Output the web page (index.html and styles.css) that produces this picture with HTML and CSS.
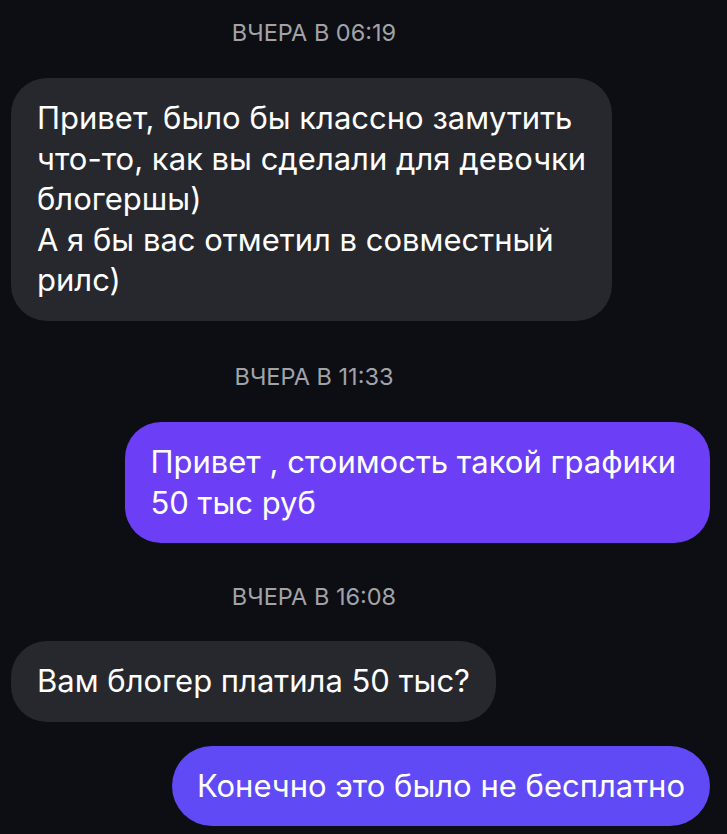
FILE: index.html
```html
<!DOCTYPE html>
<html lang="ru">
<head>
    <meta charset="UTF-8">
    <meta name="viewport" content="width=device-width, initial-scale=1.0">
    <title>Чат</title>
    <link rel="stylesheet" href="styles.css">
</head>
<body>
    <div class="chat">
        <div class="time">ВЧЕРА В 06:19</div>
        <div class="bubble in">Привет, было бы классно замутить<br>что-то, как вы сделали для девочки<br>блогершы)<br>А я бы вас отметил в совместный<br>рилс)</div>

        <div class="time">ВЧЕРА В 11:33</div>
        <div class="bubble out first">Привет , стоимость такой графики<br>50 тыс руб</div>

        <div class="time later">ВЧЕРА В 16:08</div>
        <div class="bubble in">Вам блогер платила 50 тыс?</div>
        <div class="bubble out last">Конечно это было не бесплатно</div>
    </div>
</body>
</html>
```

FILE: styles.css
```css
body {
    margin: 0;
    padding: 0;
    background-color: #0c0e13;
    font-family: Inter, Roboto, "Liberation Sans", sans-serif;
    color: #fff;
}

.chat {
    display: flex;
    flex-direction: column;
    padding: 21px 17px 10px 11px;
}

.time {
    width: 606px;
    text-align: center;
    font-size: 23.5px;
    line-height: 24px;
    color: #a2a3a8;
    margin: 44px 0 33px;
}

.time:first-child {
    margin-top: 0;
}

.time.later {
    margin-top: 42px;
    margin-bottom: 32px;
}

.bubble {
    padding: 20px 26px;
    font-size: 31px;
    line-height: 40.6px;
    border-radius: 36px;
    white-space: nowrap;
}

.bubble.in {
    align-self: flex-start;
    background: #26282d;
}

.bubble.out {
    align-self: flex-end;
    padding-left: 25px;
    padding-right: 25px;
}

.bubble.first {
    background: #6c3ff7;
    padding-right: 34px;
}

.bubble.last {
    background: #604af6;
    margin-top: 24px;
    border-radius: 40px;
}
```
